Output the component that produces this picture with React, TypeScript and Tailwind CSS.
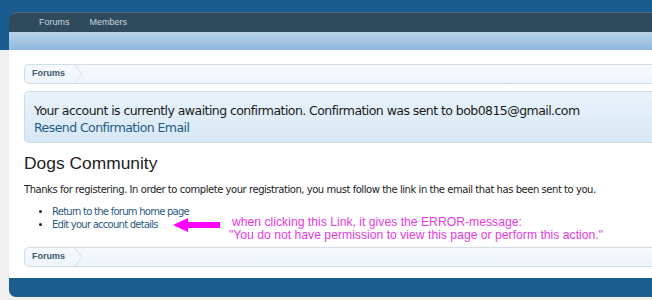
import React from "react";

function Crumbs() {
	return (
		<div className="flex h-[20px] items-stretch rounded-l-[5px] border border-r-0 border-[#d3dde5] bg-[linear-gradient(#f7fafd,#eef4f9)]">
			<div className="relative flex items-center pl-[7px] pr-[10px] text-[9px] font-bold text-[#415a6c]">
				Forums
				<svg className="absolute right-[-8px] top-[-1px]" width="9" height="20" viewBox="0 0 9 20">
					<path d="M0 0 L8 10 L0 20" fill="#f4f8fc" stroke="#d3dde5" strokeWidth="1" />
				</svg>
			</div>
		</div>
	);
}

export default function App() {
	return (
		<div className="min-h-[300px] bg-[linear-gradient(#1a5c8e_0,#1a5c8e_50px,#f0f0f0_50px)] font-['Liberation_Sans',Arial,sans-serif]">
			<div className="ml-[9px] pt-[12px]">
				<nav className="flex h-[20px] items-center gap-[20px] rounded-tl-[7px] border-t border-[#4a6d88] bg-[#2f4a5d] pl-[30px] text-[9px] text-[#c9d6df]">
					<span>Forums</span>
					<span>Members</span>
				</nav>
				<div className="h-[18px] bg-[linear-gradient(#b9d4ea,#8fb8dc)]" />
				<main className="relative h-[228px] bg-white pl-[15px] pt-[14px]">
					<Crumbs />
					<div className="mt-[7px] h-[52px] rounded-l-[5px] border border-r-0 border-[#cfdce7] bg-[linear-gradient(#e9f3fb,#d8e8f5)] pl-[9px] pt-[10px] text-[12.5px] leading-[17px] font-['DejaVu_Sans',sans-serif] tracking-[-0.56px]">
						<p className="text-[#1a1a1a]">
							Your account is currently awaiting confirmation. Confirmation was sent to bob0815@gmail.com
						</p>
						<p className="text-[#1f5a86]">Resend Confirmation Email</p>
					</div>
					<h1 className="mt-[9px] text-[17.4px] leading-[22px] text-[#222]">Dogs Community</h1>
					<p className="mt-[9px] text-[10px] leading-[14px] font-['DejaVu_Sans',sans-serif] tracking-[-0.45px] text-[#222]">
						Thanks for registering. In order to complete your registration, you must follow the link in the email that has been sent to you.
					</p>
					<ul className="mt-[8px] ml-[20px] list-disc text-[10px] leading-[13px] font-['DejaVu_Sans',sans-serif] tracking-[-0.75px] text-[#2b5a80] marker:text-[#222]">
						<li className="ml-[8px]">Return to the forum home page</li>
						<li className="ml-[8px]">Edit your account details</li>
					</ul>
					<div className="mt-[16px]">
						<Crumbs />
					</div>
					<svg className="absolute left-[164px] top-[168px]" width="47" height="14" viewBox="0 0 47 14">
						<path d="M0 7 L15 0 L15 4 L47 4 L47 10 L15 10 L15 14 Z" fill="#ff00ff" />
					</svg>
					<div className="absolute left-[220px] top-[166px] text-[12.2px] leading-[13px] text-[#e33be0]">
						<p className="pl-[3px]">when clicking this Link, it gives the ERROR-message:</p>
						<p>"You do not have permission to view this page or perform this action."</p>
					</div>
				</main>
				<div className="h-[19px] rounded-bl-[7px] bg-[#1b5e90]" />
			</div>
		</div>
	);
}
